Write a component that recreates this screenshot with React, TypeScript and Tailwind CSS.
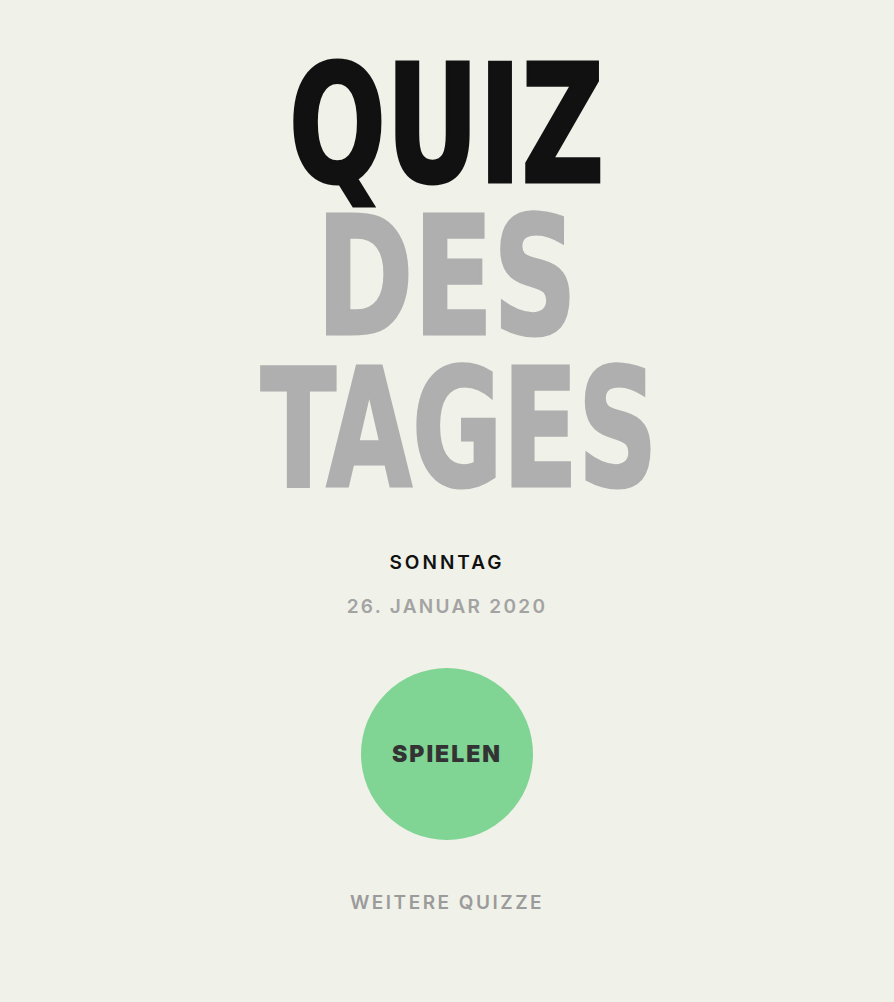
export default function App() {
  return (
    <div className="min-h-screen w-full bg-[#f0f1e8] flex flex-col items-center">
      <div className="mt-[50px] flex flex-col items-center font-['DejaVu_Sans_Condensed','DejaVu_Sans',sans-serif] font-bold text-[164px] leading-[152px] tracking-[0px] [-webkit-text-stroke:3px_currentColor]">
        <div className="text-[#111111] scale-x-[0.775]">QUIZ</div>
        <div className="text-[#afafaf] scale-x-[0.79]">DES</div>
        <div className="ml-[24px] text-[#afafaf] scale-x-[0.748]">TAGES</div>
      </div>
      <div className="mt-[43px] font-['Inter',sans-serif] font-semibold text-[19px] tracking-[3px] text-[#111111]">SONNTAG</div>
      <div className="mt-[15px] font-['Inter',sans-serif] font-semibold text-[19px] tracking-[2.3px] text-[#a3a3a3]">26. JANUAR 2020</div>
      <button className="mt-[47px] w-[172px] h-[172px] rounded-full bg-[#80d494] flex items-center justify-center font-['Inter',sans-serif] font-black text-[23px] tracking-[2px] text-[#333333]">SPIELEN</button>
      <div className="mt-[49px] font-['Inter',sans-serif] font-semibold text-[19px] tracking-[2.5px] text-[#9b9b9b]">WEITERE QUIZZE</div>
    </div>
  );
}
